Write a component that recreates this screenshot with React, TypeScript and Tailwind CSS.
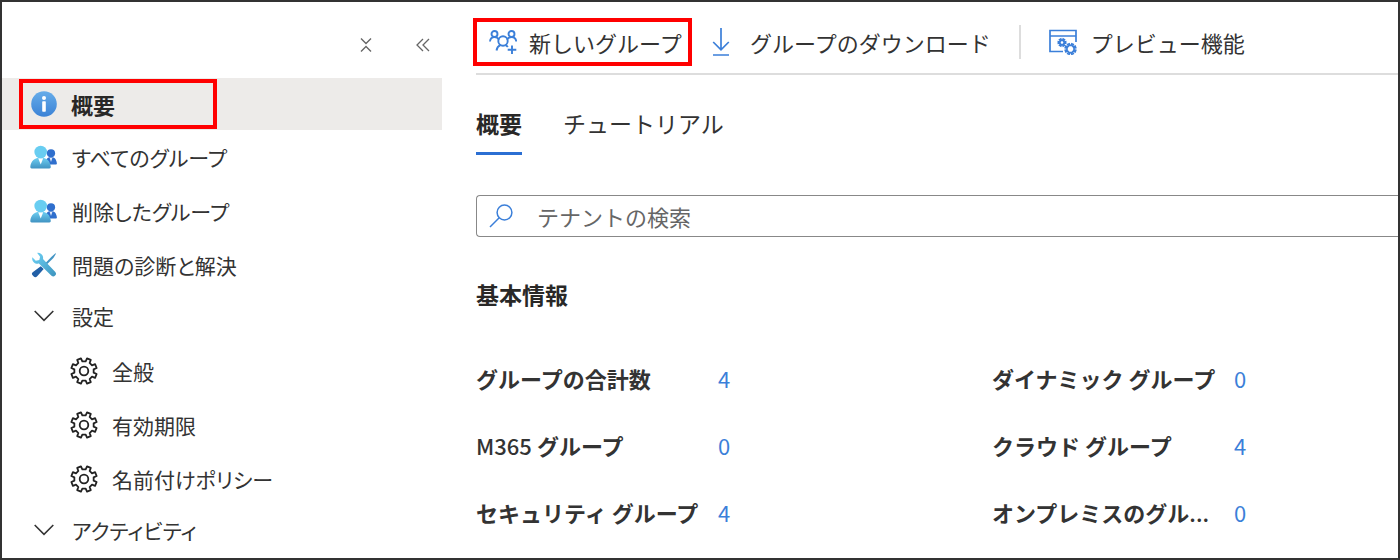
import { type ReactNode } from "react"

type IconProps = { className?: string }

const blue = "#3b7fd9"

// Closed outline of a cog wheel with flat teeth
function cogPath(cx: number, cy: number, teeth: number, inner: number, outer: number) {
  const step = (Math.PI * 2) / teeth
  const points: string[] = []
  for (let i = 0; i < teeth; i++) {
    const mid = (i + 0.5) * step - Math.PI / 2
    const corners = [
      [inner, -0.28],
      [outer, -0.2],
      [outer, 0.2],
      [inner, 0.28],
    ]
    corners.forEach(([r, a]) => {
      const x = cx + r * Math.cos(mid + a * step)
      const y = cy + r * Math.sin(mid + a * step)
      points.push(`${x.toFixed(2)} ${y.toFixed(2)}`)
    })
  }
  return `M${points.join("L")}Z`
}

function InfoIcon({ className }: IconProps) {
  return (
    <svg viewBox="0 0 26 26" className={className} aria-hidden="true">
      <defs>
        <linearGradient id="info" x1="0" y1="0" x2="0" y2="1">
          <stop offset="0" stopColor="#66ace9" />
          <stop offset="1" stopColor="#3b82d6" />
        </linearGradient>
      </defs>
      <circle cx="13" cy="13" r="12.8" fill="url(#info)" />
      <circle cx="13" cy="7" r="2" fill="#fff" />
      <rect x="11.2" y="10.3" width="3.6" height="10.4" rx="0.8" fill="#fff" />
    </svg>
  )
}

function UsersIcon({ className }: IconProps) {
  return (
    <svg viewBox="0 0 28 24" className={className} aria-hidden="true">
      <defs>
        <linearGradient id="user" x1="0" y1="0" x2="0" y2="1">
          <stop offset="0" stopColor="#6fd0f3" />
          <stop offset="1" stopColor="#4093c2" />
        </linearGradient>
      </defs>
      <path d="M16.500 19.500h9.400a1 1 0 0 0 1-1.100c-.4-3.600-2-6.400-6-6.400-2.600 0-4.400 1.600-5 4z" fill="#2f6fcd" />
      <path d="M19.500 12.600l1.500 4.400 1.500-4.400z" fill="#dfeafa" />
      <circle cx="21" cy="8.300" r="4.100" fill="#2f6fcd" />
      <path d="M1.700 23.400h17.600a1.500 1.500 0 0 0 1.500-1.700C20.200 16.200 16.800 12.500 10.700 12.500S.900 16.200.3 21.700a1.500 1.500 0 0 0 1.400 1.700z" fill="url(#user)" />
      <path d="M8.200 13.200l2.500 6.300 2.500-6.300z" fill="#fff" />
      <circle cx="10.700" cy="7" r="6.300" fill="#68cdf1" />
    </svg>
  )
}

function ToolsIcon({ className }: IconProps) {
  return (
    <svg viewBox="0 0 26 26" className={className} aria-hidden="true">
      <defs>
        <linearGradient id="wrench" x1="0" y1="0" x2="1" y2="1">
          <stop offset="0" stopColor="#6ed2f6" />
          <stop offset="1" stopColor="#3d94be" />
        </linearGradient>
      </defs>
      <path d="M24.500 1.200l.5.500-2.600 4.200-9.200 9.200-1.400-1.400 9-9.200z" fill="#4394c4" />
      <path d="M9.800 14.200l2.900 2.900-6.500 7.100a2.600 2.600 0 0 1-3.700 0l-.9-.9a2.200 2.200 0 0 1 .1-3.100z" fill="#225fa6" />
      <path d="M6.200.9c3.800-.5 6.600 2.800 5.800 6.200l12.300 12.900a2.700 2.700 0 0 1-3.800 3.800L7.900 11.600C4 12.400.5 9.400 1.300 5.200l3.500 3.600 3.500-.9.800-3.200z" fill="url(#wrench)" />
    </svg>
  )
}

function GearIcon({ className }: IconProps) {
  return (
    <svg viewBox="0 0 28 28" className={className} fill="none" stroke="#222" strokeWidth="1.8" strokeLinejoin="round" aria-hidden="true">
      <path d={cogPath(14, 14, 8, 9.8, 13)} />
      <circle cx="14" cy="14" r="4.300" />
    </svg>
  )
}

function ChevronIcon({ className }: IconProps) {
  return (
    <svg viewBox="0 0 20 12" className={className} fill="none" stroke="#333" strokeWidth="1.600" aria-hidden="true">
      <path d="M.7 1L10 10.300 19.300 1" />
    </svg>
  )
}

function AddGroupIcon({ className }: IconProps) {
  return (
    <svg viewBox="0 0 28 26" className={className} fill="none" stroke={blue} strokeWidth="1.900" aria-hidden="true">
      <circle cx="5.500" cy="5" r="3" />
      <circle cx="22.500" cy="5" r="3" />
      <path d="M1 12.500c.2-2.600 1.800-4.400 4.500-4.400 2.200 0 3.700 1.200 4.600 2.600M27.200 12.500c-.2-2.600-2-4.400-4.700-4.400-2.200 0-3.700 1.200-4.600 2.600" />
      <circle cx="14" cy="12" r="4.700" />
      <path d="M7.500 21.500c.4-2.700 1.700-4.500 3.800-5.400M16.700 16.100c.8.400 1.500 1 2.100 1.900M23 16.500v8.600M18.700 20.800h8.600" />
    </svg>
  )
}

function DownloadIcon({ className }: IconProps) {
  return (
    <svg viewBox="0 0 18 28" className={className} fill="none" stroke={blue} strokeWidth="1.700" aria-hidden="true">
      <path d="M9 0v21.500M1.200 14L9 21.800 16.800 14M1 27h16" />
    </svg>
  )
}

function PreviewIcon({ className }: IconProps) {
  return (
    <svg viewBox="0 0 28 26" className={className} fill="none" stroke={blue} strokeWidth="1.700" aria-hidden="true">
      <path d="M14 22.500H1V1.500h26v11.500M1 7h26" />
      <path d={cogPath(13, 13.500, 6, 2, 3.800)} strokeWidth="1.500" />
      <path d={cogPath(21.500, 20, 8, 3.500, 5.500)} strokeWidth="1.500" />
    </svg>
  )
}

function SearchIcon({ className }: IconProps) {
  return (
    <svg viewBox="0 0 24 24" className={className} fill="none" stroke={blue} strokeWidth="1.500" aria-hidden="true">
      <circle cx="15.500" cy="8.500" r="7.400" />
      <path d="M10.200 13.800L1 23" />
    </svg>
  )
}

type NavItem = { label: string; icon: ReactNode }

const mainItems: NavItem[] = [
  { label: "すべてのグループ", icon: <UsersIcon className="h-6 w-7" /> },
  { label: "削除したグループ", icon: <UsersIcon className="h-6 w-7" /> },
  { label: "問題の診断と解決", icon: <ToolsIcon className="h-6.5 w-6.5" /> },
]

const settingItems = ["全般", "有効期限", "名前付けポリシー"]

const stats = [
  { label: "グループの合計数", value: 4 },
  { label: "ダイナミック グループ", value: 0 },
  { prefix: "M365", label: " グループ", value: 0 },
  { label: "クラウド グループ", value: 4 },
  { label: "セキュリティ グループ", value: 4 },
  { label: "オンプレミスのグル", suffix: "...", value: 0 },
]

function Section({ label }: { label: string }) {
  return (
    <button type="button" aria-expanded="true" className="flex h-12 w-full items-center pl-8">
      <span className="w-[38px]">
        <ChevronIcon className="h-3 w-5" />
      </span>
      {label}
    </button>
  )
}

function Sidebar() {
  return (
    <nav className="w-[440px] shrink-0 text-[21px] leading-8 text-[#333] [font-feature-settings:'palt']">
      <div className="flex h-19 items-center justify-end gap-10 pt-2.5 pr-2">
        <button type="button" aria-label="すべて折りたたむ">
          <svg viewBox="0 0 12 16" className="h-4 w-3" fill="none" stroke="#666" strokeWidth="1.400">
            <path d="M1 1.500l5 5 5-5M1 14.500l5-5 5 5" />
          </svg>
        </button>
        <button type="button" aria-label="メニューを閉じる" className="px-1">
          <svg viewBox="0 0 14 14" className="h-3.5 w-3.5" fill="none" stroke="#666" strokeWidth="1.300">
            <path d="M7 1L1 7l6 6M13 1L7 7l6 6" />
          </svg>
        </button>
      </div>
      <div className="bg-[#edebe9] py-px pl-[17px]">
        <a href="#overview" className="flex h-[50px] w-[198px] items-center border-4 border-[#f00] pl-2 text-[22px] font-bold text-[#292827]">
          <span className="w-10">
            <InfoIcon className="h-6.5 w-6.5" />
          </span>
          概要
        </a>
      </div>
      {mainItems.map((item) => (
        <a key={item.label} href="#groups" className="flex h-[54px] items-center pl-[26px]">
          <span className="flex w-8 justify-center">{item.icon}</span>
          <span className="pl-3">{item.label}</span>
        </a>
      ))}
      <Section label="設定" />
      <div className="pt-1">
        {settingItems.map((label) => (
          <a key={label} href="#settings" className="flex h-[54px] items-center gap-3.5 pl-17">
            <GearIcon className="h-7 w-7" />
            {label}
          </a>
        ))}
      </div>
      <Section label="アクティビティ" />
    </nav>
  )
}

function Toolbar() {
  return (
    <div className="flex h-[73px] items-center border-b-2 border-[#ddd] pt-2 whitespace-nowrap">
      <button type="button" className="-ml-[3px] flex h-12 w-[219px] items-center gap-3 border-4 border-[#f00] pl-3">
        <AddGroupIcon className="h-6.5 w-7" />
        新しいグループ
      </button>
      <button type="button" className="ml-5 flex items-center gap-5">
        <DownloadIcon className="h-7 w-4.5" />
        グループのダウンロード
      </button>
      <div className="ml-7 h-8.5 w-0.5 bg-[#ddd]" />
      <button type="button" className="ml-7 flex items-center gap-3.5">
        <PreviewIcon className="h-6.5 w-7" />
        プレビュー機能
      </button>
    </div>
  )
}

export default function App() {
  return (
    <div className="flex min-h-screen border-2 border-[#333] bg-white font-['Noto_Sans_CJK_JP',sans-serif]">
      <Sidebar />
      <main className="min-w-0 flex-1 pl-[34px] text-[22px] leading-8 text-[#333]">
        <Toolbar />
        <div role="tablist" className="flex gap-[41px] pt-8 text-[23px]">
          <button type="button" role="tab" aria-selected="true" className="h-12 border-b-3 border-[#2b6fd3] pb-4.5 font-bold text-[#292827]">
            概要
          </button>
          <button type="button" role="tab" aria-selected="false" className="h-12 border-b-3 border-transparent pb-4.5">
            チュートリアル
          </button>
        </div>
        <label className="mt-10 flex h-[42px] items-center rounded-l-sm border border-r-0 border-[#888] pl-3">
          <SearchIcon className="h-6 w-6" />
          <input type="search" aria-label="テナントの検索" placeholder="テナントの検索" className="ml-6 min-w-0 flex-1 outline-none placeholder:text-[#666]" />
        </label>
        <h2 className="pt-[41px] text-[23px] font-bold text-[#292827]">基本情報</h2>
        <dl className="grid grid-cols-[516px_1fr] gap-y-[35px] pt-[52px]">
          {stats.map((stat) => (
            <div key={stat.label} className="flex">
              <dt className="w-[230px] font-bold whitespace-nowrap">
                {stat.prefix && <span className="font-medium">{stat.prefix}</span>}
                {stat.label}
                {stat.suffix && <span className="font-medium">{stat.suffix}</span>}
              </dt>
              <dd className="pl-3">
                <a href="#groups" className="text-[#3b7fd9]">
                  {stat.value}
                </a>
              </dd>
            </div>
          ))}
        </dl>
      </main>
    </div>
  )
}
